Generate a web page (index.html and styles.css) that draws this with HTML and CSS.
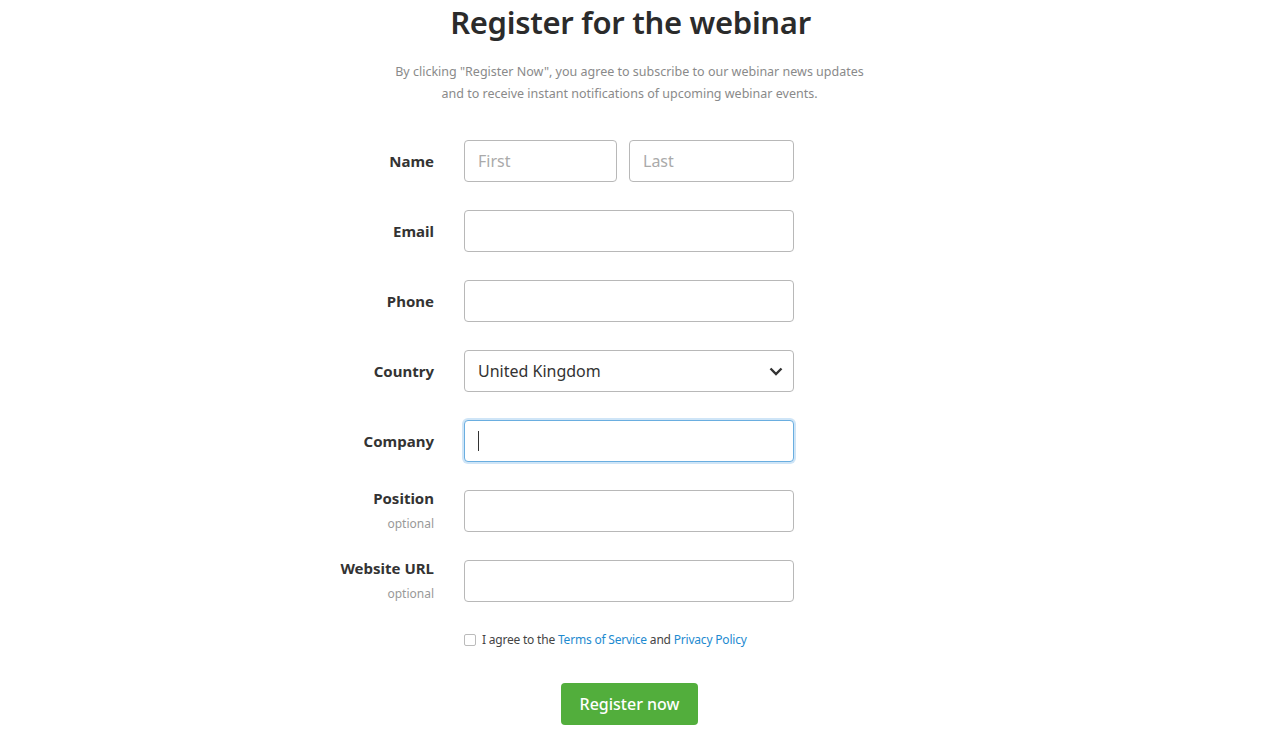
FILE: index.html
```html
<!DOCTYPE html>
<html>
<head>
	<meta charset="UTF-8">
	<title>Register for the webinar</title>
	<link rel="stylesheet" href="styles.css">
</head>
<body>
	<div id="wrap">
		<h1 class="title">Register for the webinar</h1>
		<p class="intro">By clicking "Register Now", you agree to subscribe to our webinar news updates<br>and to receive instant notifications of upcoming webinar events.</p>

		<form class="regform">
			<div class="row">
				<label class="label">Name</label>
				<div class="field pair">
					<input class="input first" type="text" placeholder="First">
					<input class="input last" type="text" placeholder="Last">
				</div>
			</div>
			<div class="row">
				<label class="label">Email</label>
				<div class="field"><input class="input" type="text"></div>
			</div>
			<div class="row">
				<label class="label">Phone</label>
				<div class="field"><input class="input" type="text"></div>
			</div>
			<div class="row">
				<label class="label">Country</label>
				<div class="field select">
					<select class="input">
						<option>United Kingdom</option>
					</select>
					<svg class="chevron" width="14" height="9" viewBox="0 0 14 9"><path d="M1.5 1.5 L7 7 L12.5 1.5" fill="none" stroke="#333" stroke-width="2.4"/></svg>
				</div>
			</div>
			<div class="row">
				<label class="label">Company</label>
				<div class="field">
					<input class="input focus" type="text">
					<span class="caret"></span>
				</div>
			</div>
			<div class="row">
				<label class="label top">Position<small>optional</small></label>
				<div class="field"><input class="input" type="text"></div>
			</div>
			<div class="row">
				<label class="label top">Website URL<small>optional</small></label>
				<div class="field"><input class="input" type="text"></div>
			</div>
			<div class="row agree">
				<span></span>
				<label class="check"><input type="checkbox" class="box"> I agree to the <a href="#">Terms of Service</a> and <a href="#">Privacy Policy</a></label>
			</div>
			<div class="submit">
				<button type="button" class="btn">Register now</button>
			</div>
		</form>
	</div>
</body>
</html>
```

FILE: styles.css
```css
*{margin:0;padding:0;box-sizing:border-box;}
body{
	font-family:"Noto Sans","Open Sans",sans-serif;
	color:#333;
	background:#fff;
}
#wrap{
	width:100%;
	text-align:center;
}
.title{
	font-size:31px;
	line-height:40px;
	font-weight:600;
	color:#2b2b2b;
	padding-top:2px;
	letter-spacing:-0.3px;
}
.intro{
	margin-top:19px;
	font-size:12.5px;
	line-height:22px;
	color:#8a8a8a;
	padding-right:2px;
}
.regform{
	width:661px;
	margin:35px auto 0;
	text-align:left;
}
.row{
	display:grid;
	grid-template-columns:134px 330px;
	column-gap:30px;
	margin-bottom:28px;
}
.label{
	font-size:15px;
	font-weight:700;
	color:#333;
	text-align:right;
	align-self:center;
}
.label.top{
	align-self:start;
	line-height:18px;
	margin-top:-1px;
	margin-bottom:-4px;
}
.label small{
	display:block;
	font-size:12px;
	line-height:16px;
	font-weight:400;
	color:#999;
	margin-top:9px;
}
.field{
	position:relative;
}
.pair{
	display:flex;
	gap:12px;
}
.input{
	display:block;
	width:100%;
	height:42px;
	border:1px solid #b8b8b8;
	border-radius:4px;
	background:#fff;
	font-family:inherit;
	font-size:16px;
	color:#333;
	padding:0 13px;
	outline:none;
}
.input::placeholder{color:#aaa;}
.pair .first{width:153px;}
.pair .last{width:165px;}
.select select{
	appearance:none;
	-webkit-appearance:none;
}
.chevron{
	position:absolute;
	right:11px;
	top:17px;
	pointer-events:none;
}
.input.focus{
	border-color:#6aaee0;
	box-shadow:0 0 0 2px #cfe5f7;
}
.caret{
	position:absolute;
	left:14px;
	top:11px;
	width:1px;
	height:20px;
	background:#333;
}
.agree{
	margin-bottom:0;
	padding-top:1px;
}
.check{
	display:flex;
	align-items:center;
	font-size:12px;
	letter-spacing:-0.2px;
	line-height:18px;
	color:#444;
	white-space:pre;
}
.check a{
	color:#1d8ad0;
	text-decoration:none;
}
.box{
	width:12px;
	height:12px;
	margin-right:3px;
	appearance:none;
	-webkit-appearance:none;
	border:1px solid #bbb;
	border-radius:2px;
	background:#fff;
}
.submit{
	margin-top:34px;
	padding-left:261px;
}
.btn{
	width:137px;
	height:42px;
	background:#52ae3c;
	border:none;
	border-radius:4px;
	color:#fff;
	font-family:inherit;
	font-size:16px;
	font-weight:500;
}
```
